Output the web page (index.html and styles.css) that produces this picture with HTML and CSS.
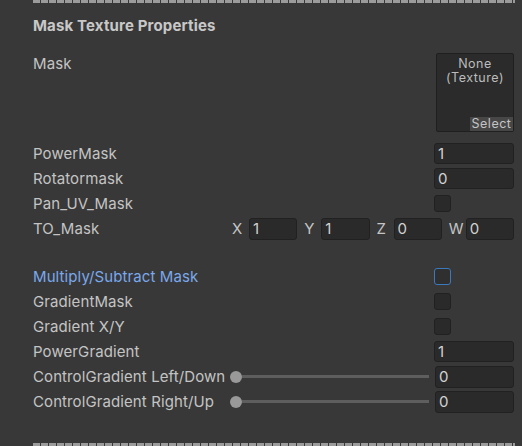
FILE: index.html
```html
<!DOCTYPE html>
<html>
<head>
<meta charset="utf-8">
<link rel="stylesheet" href="styles.css">
</head>
<body>
<div class="panel">
  <div class="sep"></div>
  <div class="header">Mask Texture Properties</div>
  <div class="tex-row">
    <div class="label">Mask</div>
    <div class="tex-box">
      <div class="tex-name">None<br>(Texture)</div>
      <div class="tex-select">Select</div>
    </div>
  </div>
  <div class="rows">
    <div class="row"><div class="label">PowerMask</div><div class="field">1</div></div>
    <div class="row"><div class="label">Rotatormask</div><div class="field">0</div></div>
    <div class="row"><div class="label">Pan_UV_Mask</div><div class="toggle"></div></div>
    <div class="row">
      <div class="label">TO_Mask</div>
      <div class="vec">
        <div class="vec-item"><span class="vec-l">X</span><div class="vfield">1</div></div>
        <div class="vec-item"><span class="vec-l">Y</span><div class="vfield">1</div></div>
        <div class="vec-item"><span class="vec-l">Z</span><div class="vfield">0</div></div>
        <div class="vec-item"><span class="vec-l">W</span><div class="vfield">0</div></div>
      </div>
    </div>
    <div class="spacer"></div>
    <div class="row"><div class="label blue">Multiply/Subtract Mask</div><div class="toggle focus"></div></div>
    <div class="row"><div class="label">GradientMask</div><div class="toggle"></div></div>
    <div class="row"><div class="label">Gradient X/Y</div><div class="toggle"></div></div>
    <div class="row"><div class="label">PowerGradient</div><div class="field">1</div></div>
    <div class="row">
      <div class="label slabel">ControlGradient Left/Down</div>
      <div class="slider"><div class="knob"></div><div class="track"></div></div>
      <div class="field sfield">0</div>
    </div>
    <div class="row">
      <div class="label slabel">ControlGradient Right/Up</div>
      <div class="slider"><div class="knob"></div><div class="track"></div></div>
      <div class="field sfield">0</div>
    </div>
  </div>
  <div class="sep bottom"></div>
</div>
</body>
</html>
```
FILE: styles.css
```css
html, body {
  margin: 0;
  padding: 0;
  background: #383838;
}
body {
  width: 522px;
  height: 446px;
  overflow: hidden;
  font-family: Inter, "Noto Sans", sans-serif;
  font-size: 15px;
  letter-spacing: 0.1px;
  color: #c4c4c4;
}
.panel {
  padding-left: 33px;
  padding-right: 8px;
}
.sep {
  height: 3px;
  width: 482px;
  background: repeating-linear-gradient(to right, #9b9b9b 0 7px, transparent 7px 8px);
}
.sep.bottom {
  margin-top: 29px;
}
.header {
  margin-top: 13px;
  height: 20px;
  line-height: 20px;
  font-weight: 700;
  letter-spacing: 0.15px;
  color: #c8c8c8;
}
.tex-row {
  margin-top: 17px;
  display: flex;
  justify-content: space-between;
  align-items: flex-start;
}
.tex-row .label {
  line-height: 22px;
}
.tex-box {
  position: relative;
  width: 76px;
  height: 77px;
  background: #2b2b2b;
  border: 1px solid #1f1f1f;
  border-radius: 2px;
}
.tex-name {
  text-align: center;
  font-size: 12.5px;
  letter-spacing: 0.5px;
  line-height: 14px;
  margin-top: 3px;
  color: #bcbcbc;
}
.tex-select {
  position: absolute;
  right: 0;
  bottom: 0;
  width: 43px;
  height: 14px;
  line-height: 14px;
  background: #474747;
  color: #c4c4c4;
  font-size: 12.5px;
  letter-spacing: 0.5px;
  text-align: center;
}
.rows {
  margin-top: 9px;
}
.row {
  height: 25px;
  display: flex;
  align-items: center;
}
.spacer {
  height: 23px;
}
.label {
  flex: 1;
  white-space: nowrap;
}
.blue {
  color: #7aa8ec;
}
.field {
  box-sizing: border-box;
  width: 80px;
  height: 21px;
  background: #2a2a2a;
  border: 1px solid #212121;
  border-radius: 3px;
  padding-left: 3px;
  line-height: 19px;
  color: #d2d2d2;
}
.toggle {
  box-sizing: border-box;
  width: 17px;
  height: 17px;
  margin-right: 63px;
  background: #2a2a2a;
  border: 1px solid #212121;
  border-radius: 3px;
}
.toggle.focus {
  border: 1px solid #3a79bb;
  background: #2f2f2f;
}
.vec {
  width: 282px;
  display: grid;
  grid-template-columns: repeat(4, 1fr);
  column-gap: 7px;
}
.vec-item {
  display: flex;
  align-items: center;
}
.vec-l {
  width: 17px;
  flex: none;
}
.vfield {
  box-sizing: border-box;
  flex: 1;
  height: 22px;
  background: #2a2a2a;
  border: 1px solid #212121;
  border-radius: 3px;
  padding-left: 3px;
  line-height: 20px;
  color: #d2d2d2;
}
.slabel {
  flex: none;
  width: 197px;
}
.slider {
  flex: 1;
  display: flex;
  align-items: center;
  margin-right: 6px;
}
.knob {
  width: 12px;
  height: 12px;
  border-radius: 50%;
  background: #999999;
  flex: none;
}
.track {
  flex: 1;
  height: 3px;
  background: #5e5e5e;
}
.sfield {
  width: 79px;
  height: 22px;
  line-height: 20px;
}
```
